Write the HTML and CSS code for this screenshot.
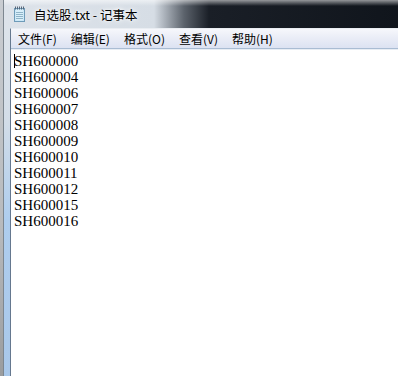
FILE: index.html
```html
<!DOCTYPE html>
<html lang="zh-CN">
<head>
  <meta charset="UTF-8">
  <title>自选股.txt - 记事本</title>
  <link rel="stylesheet" href="styles.css">
</head>
<body>

  <div class="desk"></div>

  <div class="window">
    <div class="titlebar">
      <svg class="app-icon" width="13" height="16" viewBox="0 0 13 16">
        <rect x="1.5" y="2.5" width="10" height="13" fill="#bfe0f4" stroke="#6e9bb8"/>
        <rect x="2.5" y="3.5" width="8" height="11" fill="#d9effa"/>
        <g stroke="#8fb4c8" stroke-width="1">
          <line x1="3" y1="6.5" x2="10" y2="6.5"/>
          <line x1="3" y1="8.5" x2="10" y2="8.5"/>
          <line x1="3" y1="10.5" x2="10" y2="10.5"/>
          <line x1="3" y1="12.5" x2="10" y2="12.5"/>
        </g>
        <g fill="#56677a">
          <rect x="2" y="0.5" width="1" height="3"/>
          <rect x="4" y="0.5" width="1" height="3"/>
          <rect x="6" y="0.5" width="1" height="3"/>
          <rect x="8" y="0.5" width="1" height="3"/>
          <rect x="10" y="0.5" width="1" height="3"/>
        </g>
      </svg>
      <span class="title">自选股.txt - 记事本</span>
    </div>

    <div class="client">
      <div class="menubar">
        <span class="menu-item">文件(F)</span>
        <span class="menu-item">编辑(E)</span>
        <span class="menu-item">格式(O)</span>
        <span class="menu-item">查看(V)</span>
        <span class="menu-item">帮助(H)</span>
      </div>

      <div class="editor"><span class="caret"></span>SH600000
SH600004
SH600006
SH600007
SH600008
SH600009
SH600010
SH600011
SH600012
SH600015
SH600016</div>
    </div>
  </div>

</body>
</html>
```

FILE: styles.css
```css
body {
  margin: 0;
  height: 376px;
  overflow: hidden;
  display: flex;
  background: #c4c6c8;
}

.desk {
  width: 3px;
  background: linear-gradient(to bottom, #c9cdd2, #b8babd 60%, #9a9c9e);
  border-right: 1px solid #7d8790;
}

.window {
  flex: 1;
  display: flex;
  flex-direction: column;
  background: linear-gradient(to bottom, #dfe5eb 0, #d3dde8 120px, #aecdee 220px, #a9c8ea 100%);
}

.titlebar {
  height: 28px;
  display: flex;
  align-items: center;
  padding-left: 9px;
  gap: 8px;
  background:
    linear-gradient(to bottom, rgba(255,255,255,0.55) 0, rgba(255,255,255,0) 6px),
    linear-gradient(to right, #dde3ea 0, #d6dde5 150px, #5c636c 180px, #1a1f27 205px, #10151c 100%);
}

.app-icon {
  display: block;
  margin-top: -1px;
}

.title {
  font-family: "Noto Sans CJK SC", "Noto Sans", sans-serif;
  font-size: 12.5px;
  color: #000;
  text-shadow: 0 0 6px #fff, 0 0 3px #fff;
}

.client {
  flex: 1;
  display: flex;
  flex-direction: column;
  margin-left: 6px;
  border-left: 1px solid #65788f;
  border-top: 1px solid #e9edf2;
}

.menubar {
  height: 19px;
  display: flex;
  align-items: center;
  padding-left: 0;
  background: linear-gradient(to bottom, #f6f7fb 0, #e9ecf6 50%, #dce2f2 100%);
  border-bottom: 1px solid #a9bcd3;
}

.menu-item {
  padding: 0 7px;
  font-family: "Noto Sans CJK SC", "Noto Sans", sans-serif;
  font-size: 12px;
  color: #000;
  line-height: 19px;
}

.editor {
  flex: 1;
  background: #fff;
  border-top: 1px solid #e8edf4;
  padding: 3px 0 0 3px;
  white-space: pre;
  font-family: "Liberation Serif", serif;
  font-size: 15px;
  line-height: 16px;
  color: #000;
}

.caret {
  display: inline-block;
  width: 1px;
  height: 14px;
  margin-right: -1px;
  vertical-align: -2px;
  background: #000;
}
```
